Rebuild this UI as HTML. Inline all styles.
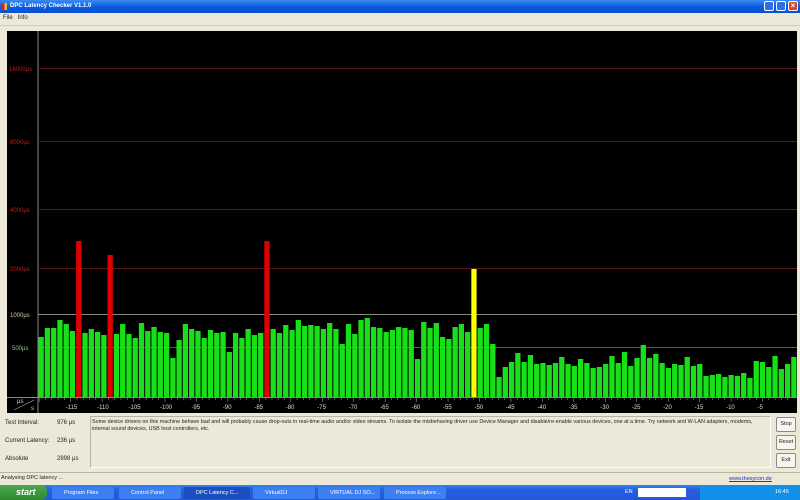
<!DOCTYPE html>
<html><head><meta charset="utf-8"><style>
*{margin:0;padding:0;box-sizing:border-box}
body{width:800px;height:500px;overflow:hidden;background:#ece9d8;font-family:"Liberation Sans",sans-serif;position:relative}
.abs{position:absolute}
.t{font-size:6px;color:#222;white-space:nowrap}
.btn{position:absolute;left:776px;width:20px;height:15px;border:1px solid #8a8a8a;border-radius:2px;background:#f6f5ef;font-size:5.5px;text-align:center;line-height:13px;color:#222}
.task{position:absolute;top:487px;height:12px;background:#3c7ff0;border-radius:2px;color:#fff;font-size:5.5px;line-height:12px;padding-left:12px;white-space:nowrap;overflow:hidden}
</style></head><body>
<div class="abs" style="left:0;top:0;width:800px;height:13px;background:linear-gradient(#3b8cf5,#0a5ce0 50%,#0850d0)"></div>
<div class="abs" style="left:2px;top:3px;width:5px;height:7px;background:linear-gradient(90deg,#e02020 50%,#f0c020 50%)"></div>
<div class="abs t" style="left:10px;top:3px;color:#fff;font-weight:bold;font-size:6px">DPC Latency Checker V1.1.0</div>
<div class="abs" style="left:764px;top:1px;width:10px;height:10px;background:#2f6ee8;border:1px solid #fff;border-radius:2px"></div>
<div class="abs" style="left:776px;top:1px;width:10px;height:10px;background:#2f6ee8;border:1px solid #fff;border-radius:2px"></div>
<div class="abs" style="left:788px;top:1px;width:10px;height:10px;background:#d8452a;border:1px solid #fff;border-radius:2px;color:#fff;font-size:8px;line-height:8px;text-align:center;font-weight:bold">×</div>
<div class="abs t" style="left:3px;top:15px">File &nbsp; Info</div>
<div class="abs" style="left:0;top:25px;width:800px;height:1px;background:#d0ccb8"></div>
<svg class="abs" style="left:0;top:0" width="800" height="500" id="s">
<rect x="7" y="31" width="790" height="382" fill="#000"/>
<line x1="38" y1="31" x2="38" y2="413" stroke="#888" stroke-width="1"/>
<line x1="38" y1="68.5" x2="797" y2="68.5" stroke="#5a1818"/>
<line x1="38" y1="141.5" x2="797" y2="141.5" stroke="#5a1818"/>
<line x1="38" y1="209.5" x2="797" y2="209.5" stroke="#5a1818"/>
<line x1="38" y1="268.5" x2="797" y2="268.5" stroke="#5a1818"/>
<line x1="38" y1="314.5" x2="797" y2="314.5" stroke="#8a8a7a"/>
<line x1="38" y1="347.5" x2="797" y2="347.5" stroke="#3a6a3a"/>
<line x1="7" y1="397.5" x2="797" y2="397.5" stroke="#888"/>
<line x1="14" y1="410" x2="34" y2="400" stroke="#aaa" stroke-width="0.6"/>
<g font-family="Liberation Sans" font-size="6">
<text x="9" y="71" fill="#b02020">16000µs</text>
<text x="10" y="144" fill="#b02020">8000µs</text>
<text x="10" y="212" fill="#b02020">4000µs</text>
<text x="10" y="271" fill="#b02020">2000µs</text>
<text x="10" y="317" fill="#d8d0a0">1000µs</text>
<text x="12" y="350" fill="#90c890">500µs</text>
<text x="17" y="403" fill="#ccc">µs</text>
<text x="31" y="410" fill="#ccc">s</text>
</g>
<g id="bars"></g>
<g id="ax" font-family="Liberation Sans" font-size="6" fill="#ddd"></g>
</svg>
<div class="abs t" style="left:5px;top:420px">Test Interval:</div>
<div class="abs t" style="left:57px;top:420px">976 µs</div>
<div class="abs t" style="left:5px;top:438px">Current Latency:</div>
<div class="abs t" style="left:57px;top:438px">236 µs</div>
<div class="abs t" style="left:5px;top:456px">Absolute</div>
<div class="abs t" style="left:57px;top:456px">2898 µs</div>
<div class="abs" style="left:90px;top:416px;width:681px;height:52px;border:1px solid #b8b4a0;border-right-color:#fff;border-bottom-color:#fff"></div>
<div class="abs t" style="left:92px;top:419px;font-size:5.4px;line-height:7px;width:676px;white-space:normal">Some device drivers on this machine behave bad and will probably cause drop-outs in real-time audio and/or video streams. To isolate the misbehaving driver use Device Manager and disable/re-enable various devices, one at a time. Try network and W-LAN adapters, modems, internal sound devices, USB host controllers, etc.</div>
<div class="btn" style="top:417px">Stop</div>
<div class="btn" style="top:435px">Reset</div>
<div class="btn" style="top:453px">Exit</div>
<div class="abs" style="left:0;top:472px;width:800px;height:1px;background:#b8b4a0"></div>
<div class="abs t" style="left:1px;top:475px;font-size:5.5px">Analysing DPC latency ...</div>
<div class="abs t" style="left:729px;top:476px;font-size:5.5px;color:#2030c0;text-decoration:underline">www.thesycon.de</div>
<div class="abs" style="left:0;top:485px;width:800px;height:15px;background:linear-gradient(#3c82f0,#245ee0 30%,#2458d8)"></div>
<div class="abs" style="left:0;top:485px;width:47px;height:15px;background:linear-gradient(#4ca84c,#2f8a2f);border-radius:0 6px 6px 0;color:#fff;font-style:italic;font-weight:bold;font-size:9px;line-height:15px;padding-left:16px">start</div>
<div class="task" style="left:52px;width:62px">Program Files</div>
<div class="task" style="left:119px;width:62px">Control Panel</div>
<div class="task" style="left:184px;width:66px;background:#1c4ec0">DPC Latency C...</div>
<div class="task" style="left:253px;width:62px">VirtualDJ</div>
<div class="task" style="left:318px;width:62px">VIRTUAL DJ SO...</div>
<div class="task" style="left:384px;width:62px">Process Explore...</div>
<div class="abs" style="left:700px;top:485px;width:100px;height:15px;background:#1290e8"></div>
<div class="abs" style="left:638px;top:488px;width:48px;height:9px;background:#fff"></div>
<div class="abs t" style="left:625px;top:489px;color:#fff;font-size:5.5px">EN</div>
<div class="abs t" style="left:775px;top:489px;color:#fff;font-size:5.5px">16:45</div>
<script>
var t=[337,328,328,320,324,331,-241,333,329,332,335,-255,334,324,334,338,323,331,327,332,333,358,340,324,329,331,338,330,333,332,352,333,338,329,335,333,-241,329,333,325,330,320,326,325,326,329,323,329,344,324,334,320,318,327,328,332,330,327,
328,330,359,322,328,323,337,339,327,324,332,-1269,328,324,344,377,367,362,353,362,355,364,363,365,363,357,364,366,359,363,368,367,364,356,363,352,366,358,345,358,354,363,368,364,365,357,366,364,376,375,374,377,375,376,373,378,361,362,367,356,369,364,357];
var n=t.length,w=759/n,h='';
for(var i=0;i<n;i++){var y=t[i],c='#18e018';if(y<0){if(y<-1000){y=-y-1000;c='#ffff00'}else{y=-y;c='#e00000'}}
var x=38+i*w;h+='<rect x="'+(x+0.5).toFixed(2)+'" y="'+y+'" width="'+(w-1).toFixed(2)+'" height="'+(397-y)+'" fill="'+c+'"/>';}
document.getElementById('bars').innerHTML=h;
var a='';for(var k=-115;k<=-5;k+=5){var x=794+k*6.29;a+='<text x="'+(x-5)+'" y="409">'+k+'</text>';}
for(var k=-120;k<0;k++){var x=794+k*6.29;if(x>38)a+='<line x1="'+x+'" y1="398" x2="'+x+'" y2="'+(k%5?400:402)+'" stroke="#aaa" stroke-width="0.5"/>';}
document.getElementById('ax').innerHTML=a;
</script>
</body></html>
